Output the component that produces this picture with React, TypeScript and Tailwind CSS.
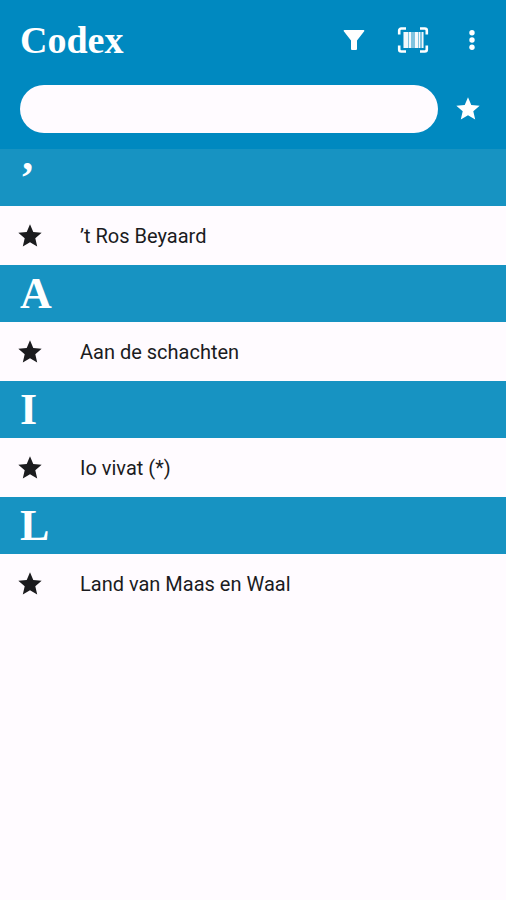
import { useState } from 'react'

interface Song {
  id: number
  title: string
}

interface SongGroup {
  letter: string
  songs: Song[]
}

const GROUPS: SongGroup[] = [
  { letter: '’', songs: [{ id: 1, title: '’t Ros Beyaard' }] },
  { letter: 'A', songs: [{ id: 2, title: 'Aan de schachten' }] },
  { letter: 'I', songs: [{ id: 3, title: 'Io vivat (*)' }] },
  { letter: 'L', songs: [{ id: 4, title: 'Land van Maas en Waal' }] },
]

function StarIcon() {
  return (
    <svg viewBox="0 0 24 24" className="size-7" fill="currentColor" aria-hidden="true">
      <path d="M12 17.27 18.18 21l-1.64-7.03L22 9.24l-7.19-.61L12 2 9.19 8.63 2 9.24l5.46 4.73L5.82 21z" />
    </svg>
  )
}

function FilterIcon() {
  return (
    <svg viewBox="0 0 22 22" className="size-[22px]" fill="currentColor" aria-hidden="true">
      <path d="M1.4 1h19.2c.7 0 1 .8.6 1.3L14 11.4V20a1 1 0 0 1-1 1H9a1 1 0 0 1-1-1v-8.6L.8 2.3C.4 1.8.7 1 1.4 1z" />
    </svg>
  )
}

function BarcodeIcon() {
  return (
    <svg viewBox="0 0 32 28" className="h-7 w-8" aria-hidden="true">
      <path
        d="M2.2 8.5V4.5A2 2 0 0 1 4.2 2.5H9M23 2.5h4.8a2 2 0 0 1 2 2v4M29.8 19.5v4a2 2 0 0 1-2 2H23M9 25.5H4.2a2 2 0 0 1-2-2v-4"
        fill="none"
        stroke="currentColor"
        strokeWidth="2.6"
      />
      <g fill="currentColor">
        <path opacity=".5" d="M6 6h21v16H6z" />
        <path opacity=".9" d="M7 6h4v16H7zM12 6h2v16h-2zM18 6h3v16h-3zM22 6h1v16h-1zM25 6h1v16h-1z" />
      </g>
    </svg>
  )
}

function MoreIcon() {
  return (
    <svg viewBox="0 0 24 24" className="size-6" fill="currentColor" aria-hidden="true">
      <circle cx="12" cy="4.7" r="2.7" />
      <circle cx="12" cy="12" r="2.7" />
      <circle cx="12" cy="19.3" r="2.7" />
    </svg>
  )
}

export default function App() {
  const [query, setQuery] = useState('')

  const groups = GROUPS
    .map(g => ({
      ...g,
      songs: g.songs.filter(s => s.title.toLowerCase().includes(query.toLowerCase())),
    }))
    .filter(g => g.songs.length > 0)

  return (
    <div className="min-h-screen bg-[#fffbff] font-['Roboto',sans-serif] text-[#1b1b1e]">
      <header className="bg-[#0089c0] px-5 pb-4 text-white">
        {/* Title and actions */}
        <div className="flex h-[85px] items-start justify-between pt-4">
          <h1 className="font-['Liberation_Serif',serif] text-[38px] leading-12 font-bold">Codex</h1>
          <div className="-mr-2.5 flex h-12 items-center gap-[11px]">
            <button type="button" aria-label="Filter" className="flex w-12 justify-center">
              <FilterIcon />
            </button>
            <button type="button" aria-label="Scan barcode" className="flex w-12 justify-center">
              <BarcodeIcon />
            </button>
            <button type="button" aria-label="More options" className="flex w-12 justify-center">
              <MoreIcon />
            </button>
          </div>
        </div>

        {/* Search */}
        <div className="flex items-center gap-4 pr-1">
          <input
            type="search"
            aria-label="Search songs"
            value={query}
            onChange={e => setQuery(e.target.value)}
            className="h-12 min-w-0 flex-1 rounded-full bg-[#fffbff] px-6 text-xl text-[#1b1b1e] outline-none"
          />
          <button type="button" aria-label="Show favourites">
            <StarIcon />
          </button>
        </div>
      </header>

      <main>
        {groups.map(group => (
          <section key={group.letter}>
            <h2 className="flex h-[57px] items-center bg-[#1793c2] px-5 font-['Liberation_Serif',serif] text-[44px] leading-none font-bold text-white">
              {group.letter}
            </h2>
            <ul>
              {group.songs.map(song => (
                <li key={song.id} className="flex h-[59px] items-center gap-9 px-4">
                  <button type="button" aria-label={`Remove ${song.title} from favourites`}>
                    <StarIcon />
                  </button>
                  <a href={`#song-${song.id}`} className="text-xl">
                    {song.title}
                  </a>
                </li>
              ))}
            </ul>
          </section>
        ))}
      </main>
    </div>
  )
}
